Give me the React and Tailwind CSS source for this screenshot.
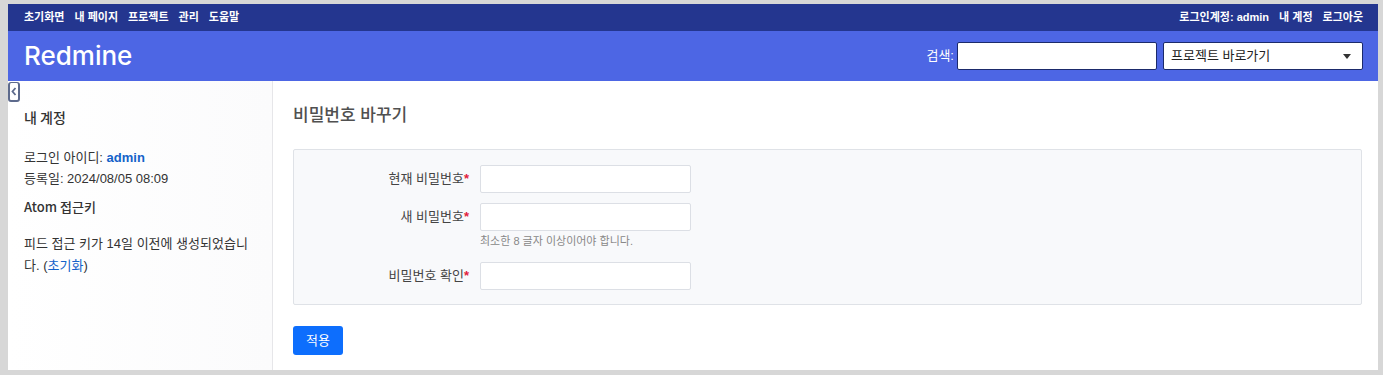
import React from 'react';

const font = { fontFamily: '"Liberation Sans", "Noto Sans CJK KR", sans-serif' };
const cjk = { fontFamily: '"Noto Sans CJK KR", sans-serif' };

function Field({ label, hint, className = '' }) {
  return (
    <div className={`flex items-start ${className}`}>
      <label className="w-[175px] shrink-0 text-right text-[13px] leading-[28px] text-[#444]">
        {label}
        <span className="text-[#e2213b] font-bold">*</span>
      </label>
      <div className="ml-[11px] flex flex-col">
        <input type="password" className="w-[211px] h-[28px] bg-white border border-[#dcdfe5] rounded-[2px] outline-none" />
        {hint && <p className="mt-[3px] text-[11px] leading-[14px] text-[#888]">{hint}</p>}
      </div>
    </div>
  );
}

export default function App() {
  return (
    <div style={font} className="w-[1383px] h-[375px] bg-[#d7d7d7] pt-[4px] pl-[8px] pr-[5px] pb-[5px]">
      <div className="flex flex-col h-full bg-white overflow-hidden">
        {/* top menu */}
        <div className="h-[27px] shrink-0 bg-[#24368f] flex items-center justify-between pl-4 pr-[15px] text-[11px] font-semibold text-white">
          <div className="flex gap-[10px]">
            <span>초기화면</span>
            <span>내 페이지</span>
            <span>프로젝트</span>
            <span>관리</span>
            <span>도움말</span>
          </div>
          <div className="flex gap-[10px]">
            <span>로그인계정: <b className="font-bold">admin</b></span>
            <span>내 계정</span>
            <span>로그아웃</span>
          </div>
        </div>

        {/* header */}
        <div className="h-[50px] shrink-0 bg-[#4d66e4] flex items-center justify-between pl-4 pr-[15px]">
          <h1 style={{ fontFamily: 'Inter, sans-serif' }} className="text-[26px] font-medium text-white leading-none">Redmine</h1>
          <div className="flex items-center text-[13px] text-white">
            <span className="mr-[3px]">검색:</span>
            <input className="w-[200px] h-[28px] bg-white border border-[#1b2a6b] rounded-[2px] outline-none" />
            <div className="ml-[6px] w-[200px] h-[28px] bg-white border border-[#1b2a6b] rounded-[2px] flex items-center justify-between pl-[7px] pr-[11px] text-[#222]">
              <span>프로젝트 바로가기</span>
              <svg width="8" height="5" viewBox="0 0 8 5"><path d="M0 0h8L4 5z" fill="#333" /></svg>
            </div>
          </div>
        </div>

        {/* body */}
        <div className="flex flex-1 relative">
          <div className="absolute left-0 top-[1px] w-[12px] h-[20px] border-2 border-t border-[#5d6a8c] rounded-[3px] bg-white flex items-center justify-center">
            <svg width="6" height="9" viewBox="0 0 6 9"><path d="M4.5 1L1.5 4.5 4.5 8" stroke="#5d6a8c" strokeWidth="1.8" fill="none" /></svg>
          </div>

          <aside className="w-[265px] shrink-0 border-r border-[#e6e6e9] bg-gradient-to-r from-white to-[#fbfbfc] pl-4 pr-[4px] text-[13px] text-[#333]">
            <h3 style={cjk} className="mt-[27px] text-[14px] font-medium leading-[18px]">내 계정</h3>
            <p className="mt-[21px] leading-[21px]">
              로그인 아이디: <b className="font-bold text-[#1462c9]">admin</b>
              <br />
              등록일: 2024/08/05 08:09
            </p>
            <h4 style={cjk} className="mt-[9px] text-[13px] font-medium leading-[18px]">Atom 접근키</h4>
            <p className="mt-[17px] leading-[22px]">
              피드 접근 키가 14일 이전에 생성되었습니
              <br />
              다. (<span className="text-[#1462c9]">초기화</span>)
            </p>
          </aside>

          <main className="flex-1 pl-5 pr-4">
            <h2 className="mt-[24px] text-[17px] leading-[22px] font-medium text-[#505050]">비밀번호 바꾸기</h2>
            <div className="mt-[22px] bg-[#f8f9fb] border border-[#dfe2e7] rounded-[2px] pt-[15px] pb-[14px]">
              <Field label="현재 비밀번호" />
              <Field label="새 비밀번호" hint="최소한 8 글자 이상이어야 합니다." className="mt-[10px]" />
              <Field label="비밀번호 확인" className="mt-[14px]" />
            </div>
            <button className="mt-[21px] w-[50px] h-[29px] bg-[#0d6efd] rounded-[3px] text-white text-[13px]">적용</button>
          </main>
        </div>
      </div>
    </div>
  );
}
